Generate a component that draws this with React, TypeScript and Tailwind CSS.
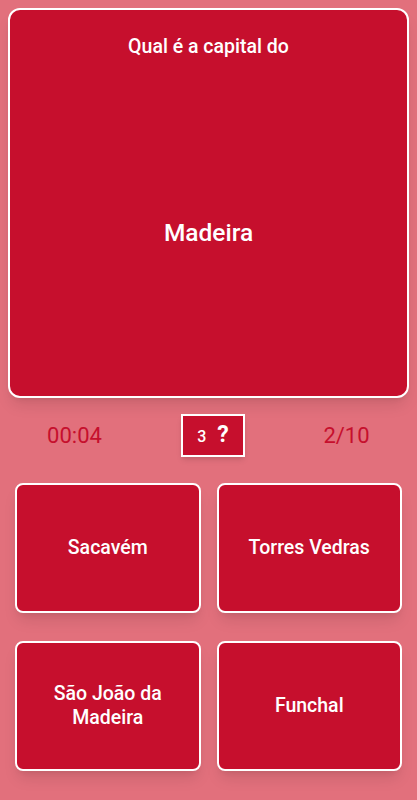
import React from 'react';

const answers = ['Sacavém', 'Torres Vedras', 'São João da Madeira', 'Funchal'];

const App: React.FC = () => {
  return (
    <div
      className="min-h-screen w-full bg-[#e2707c] flex flex-col"
      style={{ fontFamily: 'Roboto, "Noto Sans", sans-serif' }}
    >
      {/* Question card */}
      <div className="mx-2 mt-2 h-[390px] rounded-[12px] border-2 border-white bg-[#c60f2d] shadow-lg flex flex-col items-center text-white">
        <p className="mt-[24px] text-[19.5px] font-medium leading-[26px]">Qual é a capital do</p>
        <div className="flex-1 flex items-center justify-center pt-[10px]">
          <p className="text-[24.5px] font-medium">Madeira</p>
        </div>
      </div>

      {/* Stats row */}
      <div className="mt-4 h-[43px] flex items-center">
        <div className="w-[149px] shrink-0 text-center text-[22px] text-[#c60f2d]">00:04</div>
        <div className="ml-[32px] w-[64px] h-[43px] shrink-0 border-2 border-white bg-[#c60f2d] shadow-md flex items-center justify-center gap-[11px] text-white">
          <span className="text-[16px] font-medium mt-[3px]">3</span>
          <span className="text-[23px] font-bold">?</span>
        </div>
        <div className="flex-1 pl-[31px] text-center text-[22px] text-[#c60f2d]">2/10</div>
      </div>

      {/* Answers */}
      <div className="mt-[26px] mx-[15px] grid grid-cols-2 gap-x-[16px] gap-y-[28px]">
        {answers.map((a) => (
          <div
            key={a}
            className="h-[130px] rounded-[8px] border-2 border-white bg-[#c60f2d] shadow-lg flex items-center justify-center px-6 text-center text-white text-[19.5px] font-medium leading-[24px]"
          >
            {a}
          </div>
        ))}
      </div>
    </div>
  );
};

export default App;
